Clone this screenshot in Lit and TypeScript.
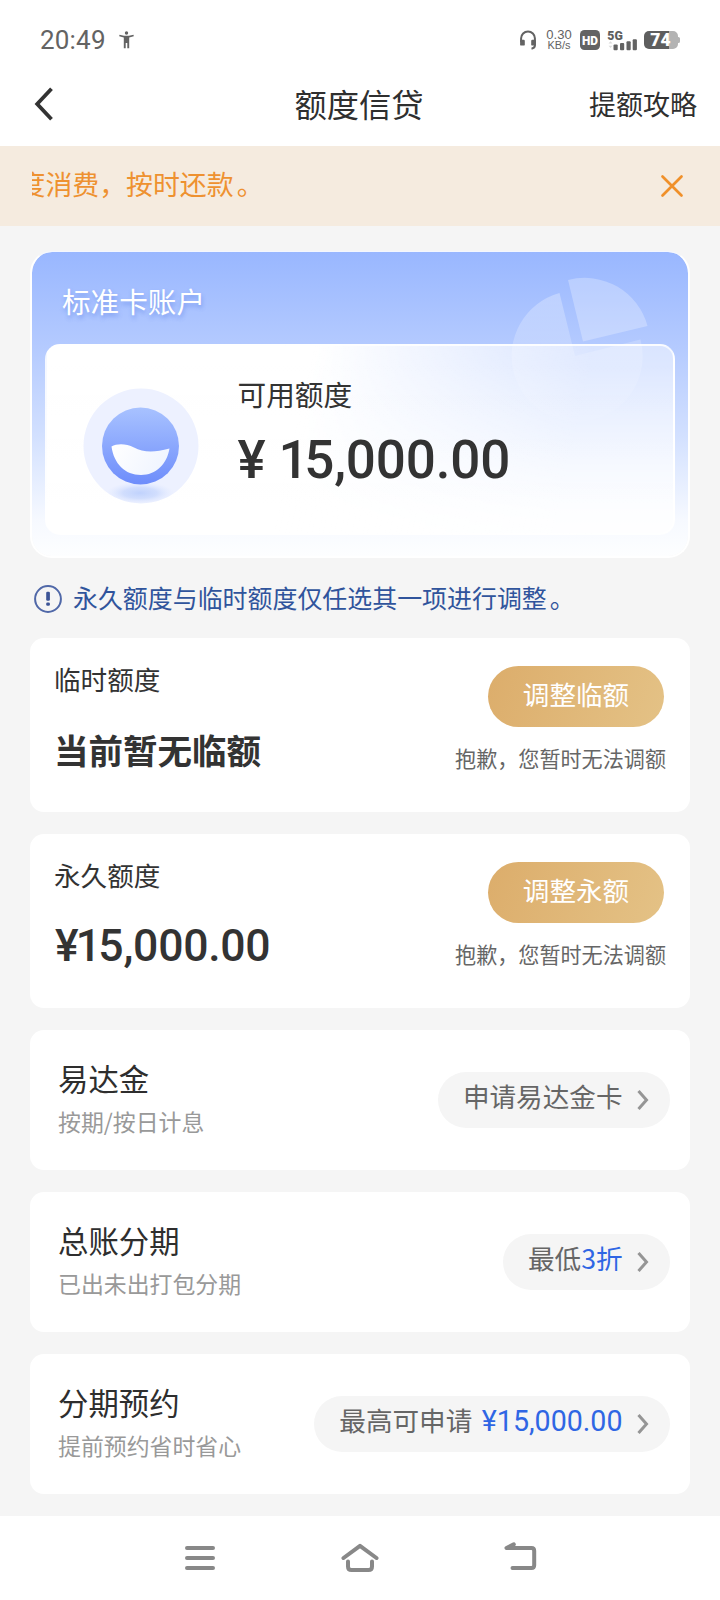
import { LitElement, html, css, svg, nothing } from "lit";
import { customElement, property } from "lit/decorators.js";

const chevron = svg`<path d="M1.500 1 L9.500 10 L1.500 19" fill="none" stroke="#959595" stroke-width="3"/>`;

@customElement("status-bar")
class StatusBar extends LitElement {
  static styles = css`
    :host { display: block; height: 72px; }
    .bar { display: flex; align-items: center; height: 80px; padding: 0 40px; box-sizing: border-box; color: #636363; }
    .time { font: 400 26px/30px Roboto, sans-serif; width: 78px; letter-spacing: .2px; }
    .spacer { flex: 1; }
    .speed { display: flex; flex-direction: column; align-items: center; width: 28px; margin: 0 7px 0 8px; font: 400 13px/11px "Liberation Sans", sans-serif; }
    .rate { font-size: 13px; }
    .unit { font-size: 11px; }
    .icon { display: block; flex: none; overflow: visible; }
    .hd { margin-right: 7px; }
    .sig { margin-right: 6px; }
    .cap { font: 900 17.5px Roboto, sans-serif; fill: #fff; }
    .net { font: 900 13.5px Roboto, sans-serif; fill: #5e5e5e; }
    .hdt { font: 900 13.5px Roboto, sans-serif; fill: #fff; }
  `;
  render() {
    return html`<div class="bar">
      <span class="time">20:49</span>
      <svg class="icon" width="17" height="20" viewBox="0 0 17 20" fill="#636363">
        <circle cx="8.5" cy="3" r="1.7"/>
        <path d="M1.500 4.800 L6 5.800 H11 L15.500 4.800 L15.800 6.200 L11.200 7.600 V18.300 H9.300 V13 H7.700 V18.300 H5.800 V7.600 L1.200 6.200 Z"/>
      </svg>
      <span class="spacer"></span>
      <svg class="icon" width="18" height="22" viewBox="0 0 18 22">
        <path d="M2.100 13 V9.300 a6.900 6.900 0 0 1 13.800 0 V16.500 q0 2.400 -3.400 3.200" fill="none" stroke="#636363" stroke-width="2"/>
        <rect x="1.100" y="10.800" width="4.700" height="5.800" rx="1.200" fill="#636363"/>
        <rect x="12.200" y="10.800" width="4.700" height="5.800" rx="1.200" fill="#636363"/>
      </svg>
      <span class="speed"><span class="rate">0.30</span><span class="unit">KB/s</span></span>
      <svg class="icon hd" width="20" height="20" viewBox="0 0 20 20">
        <rect width="20" height="20" rx="4.5" fill="#636363"/>
        <text class="hdt" x="2" y="14.900" textLength="16" lengthAdjust="spacingAndGlyphs">HD</text>
      </svg>
      <svg class="icon sig" width="31" height="22" viewBox="0 0 31 22">
        <text class="net" x="0.300" y="10.500" textLength="15.500" lengthAdjust="spacingAndGlyphs">5G</text>
        <path d="M1.500 14.500 l2 -2.200 l2 2.200 z M1.500 16.800 l2 2.200 l2 -2.200 z" fill="#dcdcdc"/>
        <g fill="#636363">
          <rect x="6.500" y="15.500" width="4.200" height="5.700" rx="1"/><rect x="13" y="14" width="4.200" height="7.200" rx="1"/>
          <rect x="19.500" y="12.300" width="4.200" height="8.900" rx="1"/><rect x="25.700" y="10.200" width="4.200" height="11" rx="1"/>
        </g>
      </svg>
      <svg class="icon" width="36" height="20" viewBox="0 0 36 20">
        <path d="M5 1 H25.500 V19 H5 a5 5 0 0 1 -5 -5 V6 a5 5 0 0 1 5 -5z" fill="#5e5e5e"/>
        <path d="M25.500 1 H29 a5 5 0 0 1 5 5 V7 h.4 a1.600 1.600 0 0 1 1.600 1.600 v2.800 a1.600 1.600 0 0 1 -1.600 1.600 H34 V14 a5 5 0 0 1 -5 5 H25.500z" fill="#b3b3b3"/>
        <text class="cap" x="16.500" y="16.200" text-anchor="middle">74</text>
      </svg>
    </div>`;
  }
}

@customElement("quota-card")
class QuotaCard extends LitElement {
  @property() label = "";
  @property() value = "";
  @property() action = "";
  @property() tip = "";
  @property({ type: Boolean }) money = false;
  static styles = css`
    :host { display: block; font-family: "Noto Sans CJK SC", sans-serif; color: #333; }
    .card { display: flex; justify-content: space-between; height: 174px; box-sizing: border-box; padding: 23px 24px 0; background: #fff; border-radius: 14px; }
    .label { font-size: 26.6px; line-height: 36px; }
    .value { margin-top: 28px; font-size: 34.5px; font-weight: 700; line-height: 48px; white-space: nowrap; }
    .money { font-family: Roboto, sans-serif; font-weight: 500; font-size: 44.5px; margin: 29px 0 0 1px; letter-spacing: -0.25px; }
    .tight { letter-spacing: -2.8px; }
    .side { display: flex; flex-direction: column; align-items: flex-end; padding-top: 5px; }
    .btn { width: 176px; height: 61px; margin-right: 2px; border: 0; padding: 0 0 5px; border-radius: 31px; color: #fff; font: 400 26.6px/56px "Noto Sans CJK SC", sans-serif; background: linear-gradient(110deg, #dcad6b, #e4c286); }
    .tip { margin-top: 16px; font-size: 21.1px; line-height: 30px; color: #666; white-space: nowrap; }
  `;
  render() {
    const value = this.money
      ? html`<span class="tight">${this.value.slice(0, 2)}</span>${this.value.slice(2)}`
      : this.value;
    return html`<section class="card">
      <div><div class="label">${this.label}</div><div class="value ${this.money ? "money" : ""}">${value}</div></div>
      <div class="side"><button class="btn">${this.action}</button><div class="tip">${this.tip}</div></div>
    </section>`;
  }
}

@customElement("service-row")
class ServiceRow extends LitElement {
  @property() label = "";
  @property() note = "";
  @property() text = "";
  @property() accent = "";
  @property({ type: Boolean }) money = false;
  static styles = css`
    :host { display: block; font-family: "Noto Sans CJK SC", sans-serif; }
    .card { display: flex; justify-content: space-between; align-items: center; height: 140px; box-sizing: border-box; padding: 0 20px 0 28px; background: #fff; border-radius: 14px; }
    .label { font-size: 30.4px; line-height: 44px; color: #2e2e2e; }
    .note { font-size: 22.9px; line-height: 32px; margin-top: 5px; margin-bottom: 7px; color: #999; }
    .pill { display: flex; align-items: center; height: 56px; box-sizing: border-box; padding: 0 21px 0 25px; border-radius: 28px; background: #f5f5f5; color: #666; font-size: 26.6px; white-space: nowrap; }
    .txt { line-height: 40px; margin-bottom: 9px; }
    .accent { color: #2f66e4; }
    .money { font: 400 28.6px/40px Roboto, sans-serif; margin-left: 9.5px; margin-bottom: 6px; }
    .arrow { margin-left: 14.5px; }
  `;
  render() {
    return html`<section class="card">
      <div><div class="label">${this.label}</div><div class="note">${this.note}</div></div>
      <div class="pill">
        <span class="txt">${this.text}</span>${this.accent
          ? html`<span class="txt accent ${this.money ? "money" : ""}">${this.accent}</span>`
          : nothing}
        <svg class="arrow" width="12" height="20" viewBox="0 0 12 20">${chevron}</svg>
      </div>
    </section>`;
  }
}

@customElement("app-root")
class AppRoot extends LitElement {
  static styles = css`
    :host { display: block; }
    .page { display: flex; flex-direction: column; width: 720px; height: 1600px; overflow: hidden; background: #f5f5f5; font-family: "Noto Sans CJK SC", sans-serif; color: #333; }
    .top { height: 146px; background: #fff; }
    .head { display: grid; grid-template-columns: 1fr auto 1fr; align-items: center; height: 64px; padding: 0 23px 0 33px; }
    .title { font-size: 32.3px; line-height: 48px; margin: 0 12px 2px 0; color: #2f2f2f; }
    .guide { justify-self: end; font-size: 27px; line-height: 40px; color: #2f2f2f; }
    .banner { display: flex; align-items: center; justify-content: space-between; height: 80px; padding: 0 36px 0 32px; box-sizing: border-box; background: #f5ebdf; color: #ee9130; }
    .clip { width: 600px; overflow: hidden; display: flex; height: 44px; margin-bottom: 4px; }
    .run { font-size: 26.9px; line-height: 44px; margin-left: -13.5px; white-space: nowrap; }
    .stop { margin-left: 3px; }
    .body { display: flex; flex-direction: column; gap: 22px; padding: 25px 30px 0; flex: 1; box-sizing: border-box; }
    .account { position: relative; height: 307px; box-sizing: border-box; padding: 0 13px; border: 2px solid #fff; border-top: 1px solid #f3f7ff; border-radius: 22px; background: linear-gradient(180deg, #99b7ff 0, #b4caff 31%, #d2e0ff 60%, #f6f9ff 88%, #fdfeff 100%) padding-box; overflow: hidden; }
    .pie { position: absolute; right: 20.5px; top: 20.5px; }
    .name { height: 92px; padding: 27px 0 0 17px; box-sizing: border-box; font-size: 28.6px; line-height: 44px; color: #fff; text-shadow: 1px 3px 4px rgba(70, 110, 220, .45); }
    .panel { position: relative; display: flex; height: 191px; box-sizing: border-box; padding: 28px 0 0 37px; border: 2px solid rgba(255,255,255,.7); border-radius: 15px; background: linear-gradient(180deg, rgba(255,255,255,0) 10%, rgba(255,255,255,.6) 90%), linear-gradient(103deg, #fff 40%, rgba(255,255,255,.5) 82%); }
    .drop { margin-top: 14px; margin-left: -1px; }
    .info { margin-left: 38.5px; }
    .sub { font-size: 28.7px; line-height: 40px; }
    .amount { font: 500 53px/62px Roboto, sans-serif; margin-top: 15px; white-space: nowrap; color: #333; letter-spacing: -.15px; }
    .one { letter-spacing: -4.5px; }
    .notice { display: flex; align-items: center; gap: 11px; height: 36px; padding: 1px 0 0 4px; margin-bottom: -1px; color: #30549c; }
    .hint { font-size: 24.95px; line-height: 36px; margin-bottom: 5px; white-space: nowrap; }
    .nav { display: flex; align-items: center; justify-content: center; gap: 121px; height: 84px; background: #fff; flex: none; }
    .ico { display: block; flex: none; }
  `;
  render() {
    return html`<div class="page">
      <header class="top">
        <status-bar></status-bar>
        <div class="head">
          <svg class="ico" width="24" height="36" viewBox="0 0 24 36"><path d="M18.500 2.800 L4.200 18 L18.500 33.200" fill="none" stroke="#333" stroke-width="3.8" stroke-linecap="butt" stroke-linejoin="miter"/></svg>
          <span class="title">额度信贷</span>
          <span class="guide">提额攻略</span>
        </div>
      </header>
      <div class="banner">
        <div class="clip"><span class="run">度消费，按时还款<span class="stop">。</span></span></div>
        <svg class="ico" width="24" height="24" viewBox="0 0 24 24"><path d="M2.500 2.500 L21.500 21.500 M21.500 2.500 L2.500 21.500" stroke="#f0902a" stroke-width="2.700" stroke-linecap="round"/></svg>
      </div>
      <main class="body">
        <section class="account">
          <svg class="pie" width="160" height="150" viewBox="508 273 160 150">
            <defs><linearGradient id="fade" x1="0" y1="290" x2="0" y2="421" gradientUnits="userSpaceOnUse">
              <stop offset="0" stop-color="#fff" stop-opacity=".3"/><stop offset="1" stop-color="#fff" stop-opacity=".04"/>
            </linearGradient></defs>
            <path d="M575 356 L559.500 293 A65.500 65.500 0 1 0 640.500 339.500 Z" fill="url(#fade)"/>
            <path d="M583 341.500 L568 280 A65 65 0 0 1 647.500 326 Z" fill="#fff" fill-opacity=".27"/>
          </svg>
          <div class="name">标准卡账户</div>
          <div class="panel">
            <svg class="ico drop" width="116" height="116" viewBox="0 0 116 116">
              <defs>
                <linearGradient id="ball" x1="0" y1="0" x2="0" y2="1"><stop offset="0" stop-color="#a8c2ff"/><stop offset="1" stop-color="#6e8dfb"/></linearGradient>
                <linearGradient id="wave" x1="0" y1="0" x2="1" y2=".3"><stop offset="0" stop-color="#fff"/><stop offset="1" stop-color="#f0f5ff"/></linearGradient>
                <radialGradient id="shade"><stop offset="0" stop-color="#c0d2fd"/><stop offset=".5" stop-color="#cad9fd" stop-opacity=".8"/><stop offset="1" stop-color="#dfe8ff" stop-opacity="0"/></radialGradient>
                <clipPath id="round"><circle cx="58" cy="58" r="57.5"/></clipPath>
              </defs>
              <circle cx="58" cy="58" r="57.500" fill="#edf1ff"/>
              <ellipse cx="57" cy="105" rx="34" ry="11" fill="url(#shade)" clip-path="url(#round)"/>
              <circle cx="57.500" cy="58" r="38.500" fill="url(#ball)"/>
              <path d="M28.500 58.500 C34 55.500 43 55.500 51 59.500 C60 64 70 65 86.500 60.500 C84 76 73 87 58 87 C42 87 31 76 28.500 58.500 Z" fill="url(#wave)"/>
            </svg>
            <div class="info">
              <div class="sub">可用额度</div>
              <div class="amount">¥ <span class="one">1</span>5,000.00</div>
            </div>
          </div>
        </section>
        <div class="notice">
          <svg class="ico" width="28" height="28" viewBox="0 0 28 28"><circle cx="14" cy="14" r="12.900" fill="none" stroke="#5068a8" stroke-width="2"/><rect x="12.200" y="6.800" width="3.700" height="9" rx="1.200" fill="#3c5496"/><rect x="12.200" y="17.600" width="3.700" height="3.200" rx="1.200" fill="#3c5496"/></svg>
          <span class="hint">永久额度与临时额度仅任选其一项进行调整<span class="stop">。</span></span>
        </div>
        <quota-card label="临时额度" value="当前暂无临额" action="调整临额" tip="抱歉，您暂时无法调额"></quota-card>
        <quota-card label="永久额度" value="¥15,000.00" money action="调整永额" tip="抱歉，您暂时无法调额"></quota-card>
        <service-row label="易达金" note="按期/按日计息" text="申请易达金卡"></service-row>
        <service-row label="总账分期" note="已出未出打包分期" text="最低" accent="3折"></service-row>
        <service-row label="分期预约" note="提前预约省时省心" text="最高可申请" accent="¥15,000.00" money></service-row>
      </main>
      <nav class="nav">
        <svg class="ico" width="40" height="36" viewBox="0 0 40 36"><path d="M7 8 H33 M7 18 H33 M7 28 H33" stroke="#888" stroke-width="4" stroke-linecap="round"/></svg>
        <svg class="ico" width="38" height="32" viewBox="0 0 38 32"><path d="M2.500 16 L19 3.800 L35.500 16" fill="none" stroke="#888" stroke-width="4" stroke-linecap="round" stroke-linejoin="round"/><path d="M7 19.500 V24.500 Q7 28 10.500 28 H27.500 Q31 28 31 24.500 V19.500" fill="none" stroke="#888" stroke-width="4" stroke-linecap="round"/></svg>
        <svg class="ico" width="40" height="36" viewBox="0 0 40 36"><path d="M13.800 4.300 L6.500 8 H31.500 Q34.200 8 34.200 10.700 V25.300 Q34.200 28 31.500 28 H12.500" fill="none" stroke="#888" stroke-width="4" stroke-linecap="round" stroke-linejoin="round"/></svg>
      </nav>
    </div>`;
  }
}
